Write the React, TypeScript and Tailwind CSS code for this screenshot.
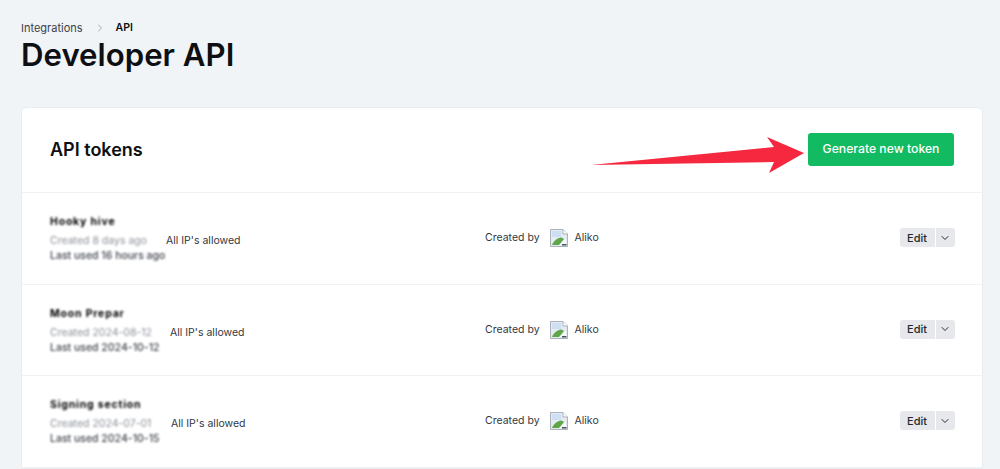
import { ChevronDown, ChevronRight } from 'lucide-react';

const tokens = [
  { name: 'Hooky hive', created: 'Created 8 days ago', used: 'Last used 16 hours ago', gap: 'w-[116px]' },
  { name: 'Moon Prepar', created: 'Created 2024-08-12', used: 'Last used 2024-10-12', gap: 'w-[120px]' },
  { name: 'Signing section', created: 'Created 2024-07-01', used: 'Last used 2024-10-15', gap: 'w-[121px]' },
];

function BrokenImage() {
  return (
    <svg viewBox="0 0 18 18" className="w-[18px] h-[18px] shrink-0">
      <path d="M.5 .5h12.500l4.500 4.500v12.500H.5z" fill="#e4ebf3" stroke="#aab1ba" strokeWidth="1" />
      <path d="M13 .5v4.500h4.500" fill="#ffffff" stroke="#aab1ba" strokeWidth="1" />
      <path d="M2 2h9v6H2z" fill="#cfdff2" />
      <path d="M2 16c1.500-4 5-7 9.500-7.500l2.500 1.500-5 6H2z" fill="#5fa648" />
      <path d="M10 16l5-6 1 1v5z" fill="#f7f8fa" />
      <path d="M12 16.500h4.500v-1.500H12z" fill="#4c5157" />
    </svg>
  );
}

function TokenRow({ name, created, used, gap }: { name: string; created: string; used: string; gap: string }) {
  return (
    <div className="h-[91.5px] border-b border-[#f0f2f4] flex items-center pl-[28px] pr-[27.5px] text-[10.5px] text-[#33383f]">
      <div className="w-[435px] shrink-0 mt-[1px]">
        <div className="blur-[1px] font-bold text-black tracking-[0.8px] leading-[15px] mb-[4px]">{name}</div>
        <div className="flex items-center leading-[15px]">
          <div className={`${gap} blur-[1px] text-[#8a8f96] whitespace-nowrap overflow-hidden`}>{created}</div>
          <span>All IP's allowed</span>
        </div>
        <div className="blur-[1px] font-medium text-[#3f444b] leading-[15px]">{used}</div>
      </div>
      <div className="flex items-center flex-1">
        <span>Created by</span>
        <div className="ml-[10px] mr-[7px]">
          <BrokenImage />
        </div>
        <span>Aliko</span>
      </div>
      <div className="flex items-center gap-px h-[19px] mb-[1px] text-[11px] font-medium text-[#25292e]">
        <div className="w-[35px] h-full bg-[#e6e8eb] rounded-l-[3px] flex items-center justify-center">Edit</div>
        <div className="w-[19px] h-full bg-[#e6e8eb] rounded-r-[3px] flex items-center justify-center">
          <ChevronDown className="w-3 h-3" strokeWidth={2} />
        </div>
      </div>
    </div>
  );
}

export default function App() {
  return (
    <div className="h-[469px] overflow-hidden bg-[#f0f4f7] px-[21px] pt-[20px] font-['Inter',sans-serif] text-[#0d0f12]">
      <div className="flex items-center text-[11px] leading-[16px] h-[16px]">
        <span className="text-[#3d4249]">Integrations</span>
        <ChevronRight className="w-3 h-3 text-[#8b9096] ml-[11px] mr-[10px]" strokeWidth={1.5} />
        <span className="font-semibold text-[10.5px]">API</span>
      </div>
      <h1 className="text-[31.2px] leading-[36px] font-semibold mt-[1px]">Developer API</h1>

      <div className="mt-[34px] mr-[-4px] bg-white rounded-t-[6px] border border-[#e9edf0]">
        <div className="relative h-[85px] border-b border-[#f0f2f4] flex items-center justify-between pl-[28px] pr-[28px]">
          <h2 className="text-[18px] leading-[24px] font-semibold">API tokens</h2>
          <svg viewBox="0 0 215 40" className="absolute left-[569px] top-[28px] w-[215px] h-[40px]">
            <polygon points="0,29 183,11 176,1 213,17 178,37 183,26" fill="#f5283f" />
          </svg>
          <button className="h-[33px] w-[146px] mb-[2px] rounded-[3px] bg-[#12bb62] text-white text-[12.2px] font-medium">
            Generate new token
          </button>
        </div>
        {tokens.map((t) => (
          <TokenRow key={t.name} {...t} />
        ))}
      </div>
    </div>
  );
}
